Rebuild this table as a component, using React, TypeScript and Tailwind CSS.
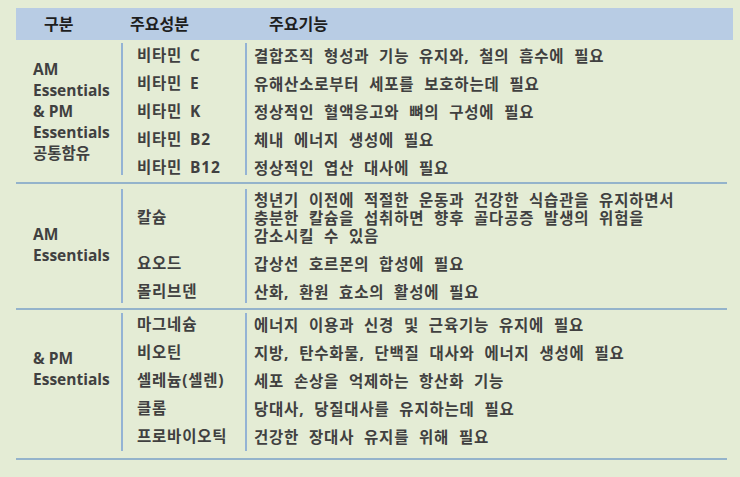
import React from "react"

interface Row {
  name: string
  desc: string[]
}

interface Section {
  label: string[]
  rows: Row[]
  dividerClass: string
  sectionClass: string
  labelClass: string
}

const sections: Section[] = [
  {
    label: ["AM", "Essentials", "& PM", "Essentials", "공통함유"],
    sectionClass: "mt-[2px]",
    dividerClass: "mt-[1px] mb-[7px]",
    labelClass: "pb-[2px]",
    rows: [
      { name: "비타민 C", desc: ["결합조직 형성과 기능 유지와, 철의 흡수에 필요"] },
      { name: "비타민 E", desc: ["유해산소로부터 세포를 보호하는데 필요"] },
      { name: "비타민 K", desc: ["정상적인 혈액응고와 뼈의 구성에 필요"] },
      { name: "비타민 B2", desc: ["체내 에너지 생성에 필요"] },
      { name: "비타민 B12", desc: ["정상적인 엽산 대사에 필요"] },
    ],
  },
  {
    label: ["AM", "Essentials"],
    sectionClass: "pt-[2px] pb-[2px]",
    dividerClass: "mt-[3px] mb-[3px]",
    labelClass: "pb-[2px]",
    rows: [
      {
        name: "칼슘",
        desc: [
          "청년기 이전에 적절한 운동과 건강한 식습관을 유지하면서",
          "충분한 칼슘을 섭취하면 향후 골다공증 발생의 위험을",
          "감소시킬 수 있음",
        ],
      },
      { name: "요오드", desc: ["갑상선 호르몬의 합성에 필요"] },
      { name: "몰리브덴", desc: ["산화, 환원 효소의 활성에 필요"] },
    ],
  },
  {
    label: ["& PM", "Essentials"],
    sectionClass: "pt-[1px] pb-[7px]",
    dividerClass: "mt-[2px] mb-0",
    labelClass: "pb-[24px]",
    rows: [
      { name: "마그네슘", desc: ["에너지 이용과 신경 및 근육기능 유지에 필요"] },
      { name: "비오틴", desc: ["지방, 탄수화물, 단백질 대사와 에너지 생성에 필요"] },
      { name: "셀레늄(셀렌)", desc: ["세포 손상을 억제하는 항산화 기능"] },
      { name: "클롬", desc: ["당대사, 당질대사를 유지하는데 필요"] },
      { name: "프로바이오틱", desc: ["건강한 장대사 유지를 위해 필요"] },
    ],
  },
]

const font = { fontFamily: '"Open Sans", "Noto Sans CJK KR", sans-serif' }

function SectionBlock({ section }: { section: Section }) {
  const span = `1 / span ${section.rows.length}`
  return (
    <div className={`grid grid-cols-[105px_2px_122px_2px_1fr] ${section.sectionClass}`}>
      <div
        className={`${section.labelClass} flex flex-col justify-center pl-[17px] text-[15.5px] leading-[21px] font-bold text-[#404040]`}
        style={{ gridRow: span, gridColumn: 1 }}
      >
        {section.label.map((l, i) => (
          <div key={i}>{l}</div>
        ))}
      </div>
      <div className={`${section.dividerClass} bg-[#94b3d4]`} style={{ gridRow: span, gridColumn: 2 }} />
      <div className={`${section.dividerClass} bg-[#94b3d4]`} style={{ gridRow: span, gridColumn: 4 }} />
      {section.rows.map((row, i) => (
        <React.Fragment key={i}>
          <div
            className="flex items-center pl-[14px] text-[15.5px] font-bold text-[#404040] tracking-[0.8px] [word-spacing:3px]"
            style={{ gridRow: i + 1, gridColumn: 3 }}
          >
            {row.name}
          </div>
          <div
            className="flex flex-col justify-center py-[5px] pl-[7px] min-h-[28px] text-[15.5px] leading-[18px] font-bold text-[#404040] tracking-[0.8px] [word-spacing:5px]"
            style={{ gridRow: i + 1, gridColumn: 5 }}
          >
            {row.desc.map((d, j) => (
              <div key={j} className="h-[18px] whitespace-nowrap">
                {d}
              </div>
            ))}
          </div>
        </React.Fragment>
      ))}
    </div>
  )
}

export default function App() {
  return (
    <div className="w-[740px] h-[477px] bg-[#e4ecd5] pt-[8px] pl-[16px] overflow-hidden" style={font}>
      <div className="w-[717px] h-[32px] bg-[#b8cce4] flex items-center text-[16px] font-bold text-[#1e1e1e]">
        <div className="w-[105px] pl-[28px]">구분</div>
        <div className="w-[126px] pl-[9px]">주요성분</div>
        <div className="pl-[22px]">주요기능</div>
      </div>
      <div className="w-[711px]">
        {sections.map((s, i) => (
          <React.Fragment key={i}>
            <SectionBlock section={s} />
            <div className="h-[2px] bg-[#94b3cb]" />
          </React.Fragment>
        ))}
      </div>
    </div>
  )
}
